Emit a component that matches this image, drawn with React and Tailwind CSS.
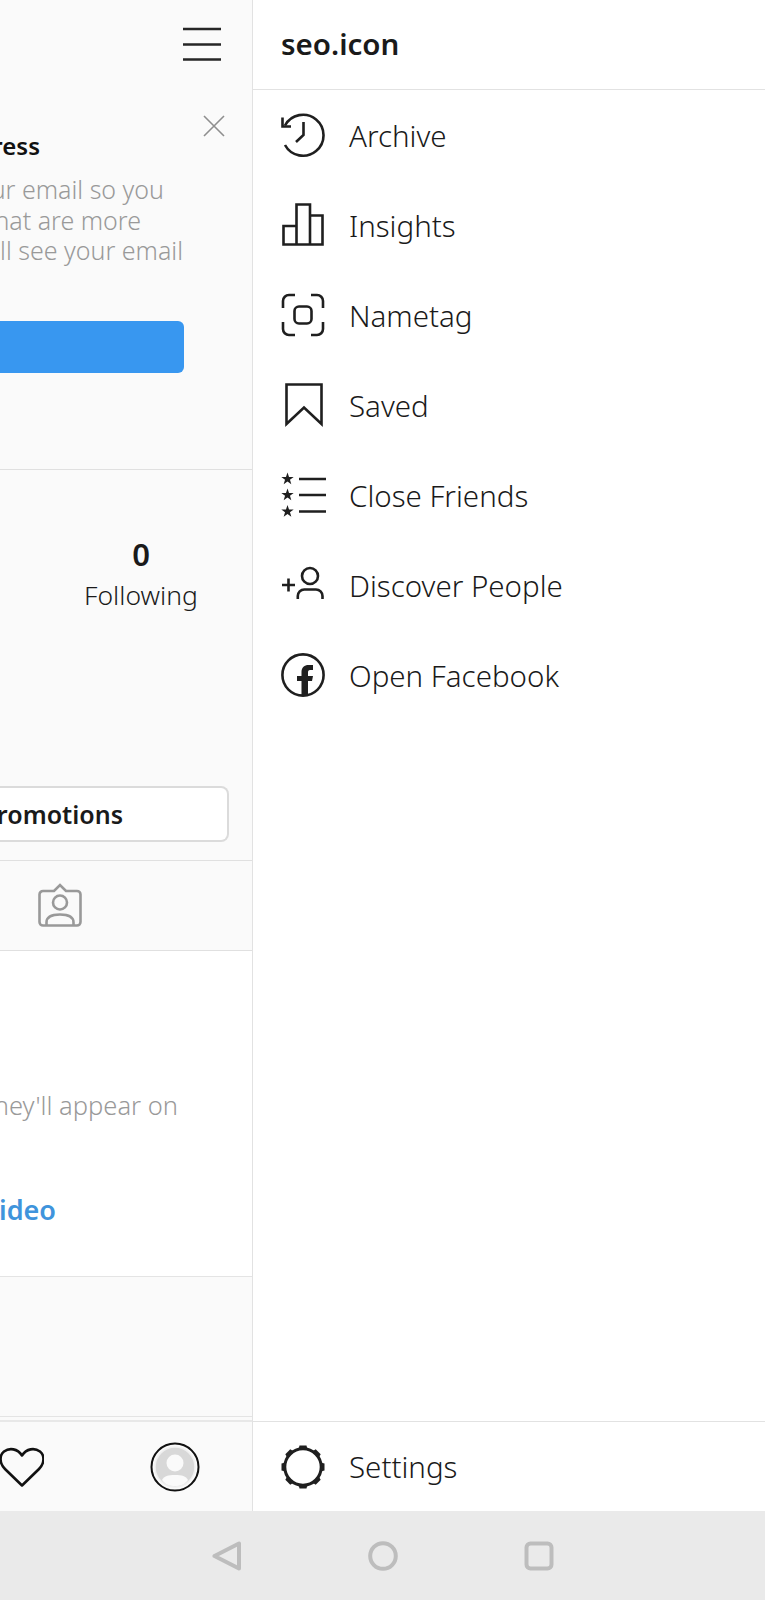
import React from 'react';

const font = "font-['Noto_Sans',sans-serif]";

const MenuIcon = ({ children }) => (
  <svg width="46" height="44" viewBox="0 0 46 44" fill="none" stroke="#1f1f1f" strokeWidth="2.6" className="shrink-0 overflow-visible">
    {children}
  </svg>
);

const menuItems = [
  {
    label: 'Archive',
    icon: (
      <>
        <path d="M4 12.5A20.5 20.5 0 1 1 4 32" />
        <path d="M1.5 4.5 1.5 13.5 10 13.5" />
        <path d="M22.5 9V22L15 29" />
      </>
    ),
  },
  {
    label: 'Insights',
    icon: <path d="M2.5 41.5V23H15.5V41.5ZM15.5 41.5V1.5H29V41.5ZM29 41.5V12.5H41.5V41.5Z" strokeLinejoin="miter" />,
  },
  {
    label: 'Nametag',
    icon: (
      <>
        <path d="M2 15V8a6 6 0 0 1 6-6h6M30 2h6a6 6 0 0 1 6 6v7M42 29v7a6 6 0 0 1-6 6h-6M14 42H8a6 6 0 0 1-6-6v-7" />
        <rect x="13.5" y="13.5" width="17" height="17" rx="4.5" />
      </>
    ),
  },
  {
    label: 'Saved',
    icon: <path d="M5.5 1.5H40.5V41L23 24.5 5.5 41Z" />,
  },
  {
    label: 'Close Friends',
    icon: (
      <>
        <path d="M18 6H45M18 22H45M18 38.5H45" />
        {[6, 22, 38.5].map((y) => (
          <path
            key={y}
            transform={`translate(6.5 ${y})`}
            stroke="none"
            fill="#1f1f1f"
            d="M0-6.5 1.53-2.1 6.18-2 2.47.8 3.82 5.26 0 2.6-3.82 5.26-2.47.8-6.18-2-1.53-2.1Z"
          />
        ))}
      </>
    ),
  },
  {
    label: 'Discover People',
    icon: (
      <>
        <path d="M1 22H14M7.5 15.5V28.5" />
        <circle cx="29" cy="13" r="8" />
        <path d="M16.8 36V33a6.5 6.5 0 0 1 6.5-6.5H35a6.5 6.5 0 0 1 6.5 6.5V36" />
      </>
    ),
  },
  {
    label: 'Open Facebook',
    icon: (
      <>
        <circle cx="22" cy="22" r="20.6" />
        <path
          stroke="none"
          fill="#1f1f1f"
          d="M20.5 42V28H16V23H20.5V19C20.5 14.5 23.5 12 27.5 12H32V17H29C27.5 17 27 18 27 19.5V23H32L31 28H27V42Z"
        />
      </>
    ),
  },
];

const MenuRow = ({ icon, label }) => (
  <div className="flex h-[90px] items-center gap-[22px] pl-[28px] text-[#1a1a1a]">
    <MenuIcon>{icon}</MenuIcon>
    <span className="mt-[1px] text-[29.5px] font-light leading-none">{label}</span>
  </div>
);

const Clipped = ({ className = '', children }) => (
  <div className={`flex justify-end whitespace-nowrap ${className}`}>{children}</div>
);

export default function App() {
  return (
    <div className={`flex h-[1600px] w-[765px] flex-col overflow-hidden bg-white ${font}`}>
      <div className="flex h-[1511px] shrink-0">
        {/* profile page pushed aside by the drawer */}
        <div className="flex w-[253px] shrink-0 flex-col overflow-hidden border-r border-[#e2e2e2] bg-[#fafafa]">
          <div className="flex h-[470px] shrink-0 flex-col items-end border-b border-[#e0e0e0]">
            <svg width="38" height="36" viewBox="0 0 38 36" stroke="#262626" strokeWidth="2.6" className="mt-[27px] mr-[31px]">
              <path d="M0 2H38M0 17.5H38M0 32.5H38" />
            </svg>
            <svg width="22" height="22" viewBox="0 0 22 22" stroke="#8e8e8e" strokeWidth="1.6" className="mt-[52px] mr-[27px]">
              <path d="M1 1 21 21M21 1 1 21" />
            </svg>
            <Clipped className="mt-[-10px] mr-[212px] h-[38px] items-center text-[24px] font-semibold text-[#111111]">Address</Clipped>
            <div className="mt-[9px] text-[25px] font-light leading-[30.5px] text-[#999999]">
              <Clipped className="mr-[88px]">your email so you</Clipped>
              <Clipped className="mr-[111px]">that are more</Clipped>
              <Clipped className="mr-[69px]">will see your email</Clipped>
            </div>
            <div className="mt-[55px] mr-[68px] h-[52px] w-full rounded-r-md bg-[#3897f0]" />
          </div>

          <div className="flex h-[391px] shrink-0 flex-col border-b border-[#e0e0e0]">
            <div className="mt-[64px] flex justify-end pr-[55px] text-[#1a1a1a]">
              <div className="flex w-[112px] flex-col items-center">
                <span className="text-[31px] font-semibold leading-[40px]">0</span>
                <span className="mt-[3px] text-[26.5px] font-light leading-[36px]">Following</span>
              </div>
            </div>
            <div className="mr-[23px] mt-[173px] flex h-[56px] items-center justify-end overflow-hidden rounded-r-lg border-2 border-l-0 border-[#dbdbdb] bg-white pt-[2px] pr-[104px] text-[25px] font-semibold whitespace-nowrap text-[#1a1a1a]">
              Promotions
            </div>
          </div>

          <div className="flex h-[90px] shrink-0 items-center border-b border-[#e0e0e0] pl-[38px]">
            <svg width="44" height="44" viewBox="0 0 44 44" fill="none" stroke="#999999" strokeWidth="2.6" className="mt-[-2px]">
              <path d="M5 8H16L22 2 28 8H39A3.5 3.5 0 0 1 42.5 11.5V39A3.5 3.5 0 0 1 39 42.5H5A3.5 3.5 0 0 1 1.5 39V11.5A3.5 3.5 0 0 1 5 8Z" />
              <circle cx="22" cy="19.5" r="7" />
              <path d="M8.5 42V39.5C8.5 34.5 13 31.5 22 31.5S35.5 34.5 35.5 39.5V42" />
            </svg>
          </div>

          <div className="flex h-[326px] shrink-0 flex-col border-b border-[#e4e4e4] bg-white">
            <Clipped className="mt-[136px] mr-[74px] text-[25.5px] font-light leading-[36px] text-[#999999]">they'll appear on</Clipped>
            <Clipped className="mt-[69px] mr-[196px] text-[27px] font-semibold leading-[36px] text-[#3f94dc]">Video</Clipped>
          </div>

          <div className="h-[140px] shrink-0 border-b border-[#e4e4e4]" />

          <div className="mt-[3px] flex h-[91px] shrink-0 items-center justify-between border-t-2 border-[#e8e8e8] pr-[52px]">
            <svg width="44" height="40" viewBox="0 0 44 40" fill="none" stroke="#111111" strokeWidth="2.6" strokeLinejoin="round">
              <path d="M22 38.5 5 22C-1 16-.5 8 4 4.5 9.5.5 17.5 1.5 22 8.5 26.5 1.5 34.5.5 40 4.5 44.5 8 45 16 39 22Z" />
            </svg>
            <svg width="50" height="50" viewBox="0 0 50 50">
              <circle cx="25" cy="25" r="23.5" fill="#fafafa" stroke="#111111" strokeWidth="2" />
              <circle cx="25" cy="25" r="20" fill="#d8d8d8" stroke="#f0f0f0" strokeWidth="1.5" />
              <circle cx="25" cy="21" r="8.5" fill="#fafafa" />
              <path d="M12 38C14 34 18 33 25 33S36 34 38 38C35 42.5 30.5 44 25 44S15 42.5 12 38Z" fill="#fafafa" />
            </svg>
          </div>
        </div>

        {/* drawer */}
        <div className="flex min-w-0 flex-1 flex-col bg-white">
          <div className="flex h-[90px] shrink-0 items-center border-b border-[#e2e2e2] pl-[28px] text-[29.5px] font-semibold text-[#1a1a1a]">
            seo.icon
          </div>
          <div className="flex-1">
            {menuItems.map((item) => (
              <MenuRow key={item.label} icon={item.icon} label={item.label} />
            ))}
          </div>
          <div className="flex h-[90px] shrink-0 items-center gap-[22px] border-t border-[#e2e2e2] pl-[28px] text-[#1a1a1a]">
            <svg width="46" height="46" viewBox="1 0 46 46" fill="none" stroke="#1f1f1f" className="shrink-0">
              <circle cx="23" cy="23" r="18.2" strokeWidth="3" />
              {[0, 45, 90, 135, 180, 225, 270, 315].map((a) => (
                <path key={a} transform={`rotate(${a} 23 23)`} d="M18.5 5.5 19.5 1.5H26.5L27.5 5.5Z" fill="#1f1f1f" stroke="none" />
              ))}
            </svg>
            <span className="text-[29.5px] font-light leading-none">Settings</span>
          </div>
        </div>
      </div>

      {/* android nav bar */}
      <div className="flex flex-1 items-center justify-center gap-[126px] bg-[#eaeaea]">
        <svg width="30" height="30" viewBox="0 0 30 30" fill="none" stroke="#bdbdbd" strokeWidth="4" strokeLinejoin="round">
          <path d="M27 2.5V27.5L2.5 15Z" />
        </svg>
        <svg width="30" height="30" viewBox="0 0 30 30" fill="none" stroke="#bdbdbd" strokeWidth="4">
          <circle cx="15" cy="15" r="12.8" />
        </svg>
        <svg width="30" height="30" viewBox="0 0 30 30" fill="none" stroke="#bdbdbd" strokeWidth="4">
          <rect x="2.5" y="2.5" width="25" height="25" rx="4" />
        </svg>
      </div>
    </div>
  );
}
